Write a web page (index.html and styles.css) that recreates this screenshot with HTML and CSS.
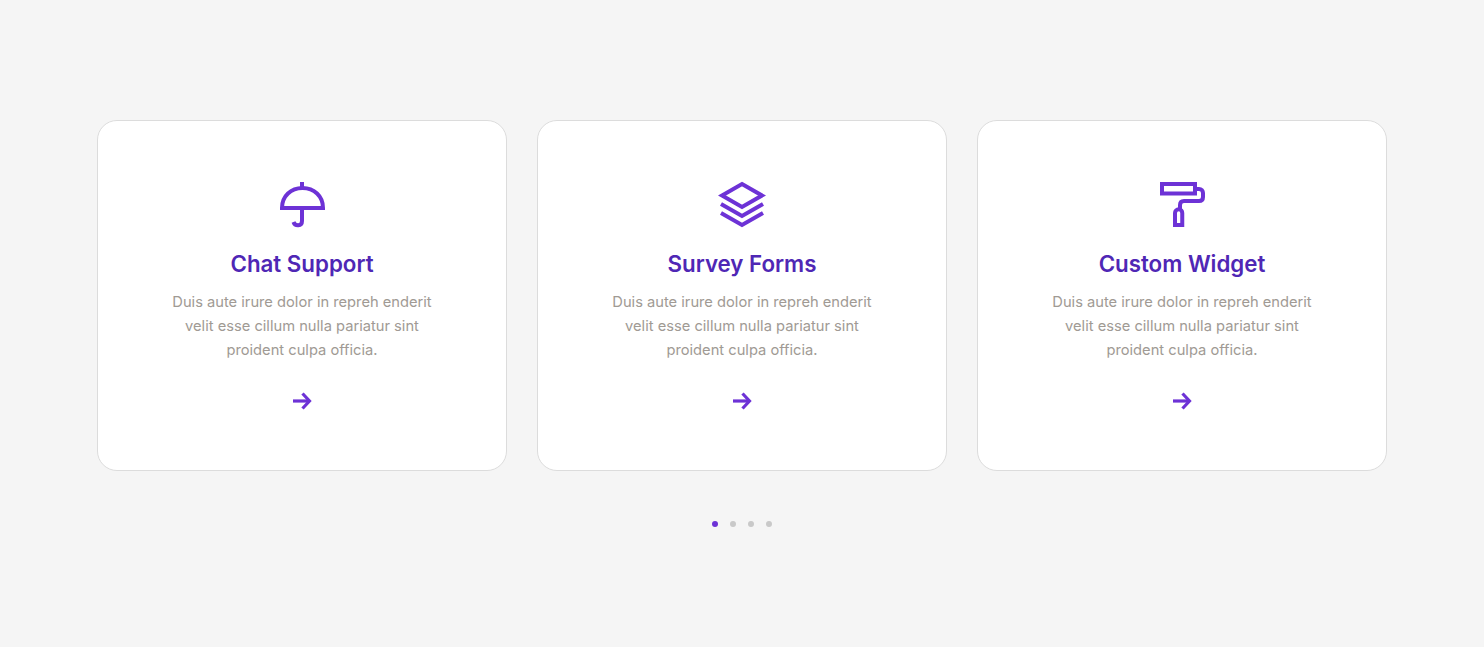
FILE: index.html
```html
<!DOCTYPE html>
<html lang="en">
<head>
<meta charset="UTF-8">
<meta name="viewport" content="width=device-width, initial-scale=1.0">
<title>Features</title>
<link rel="stylesheet" href="styles.css">
</head>
<body>

<section class="features">
  <div class="card-row">

    <div class="card">
      <svg class="card-icon" viewBox="0 0 48 48" fill="none" stroke="#6d32d6" stroke-width="4">
        <path d="M24 1v6"/>
        <path d="M4 27c0-12 9-20 20.500-20s20.500 8 20.500 20z"/>
        <path d="M24 27v13c0 5.500-7 5.500-8.500 1"/>
      </svg>
      <h3>Chat Support</h3>
      <p>Duis aute irure dolor in repreh enderit velit esse cillum nulla pariatur sint proident culpa officia.</p>
      <a class="card-link" href="#">
        <svg viewBox="0 0 20 20" fill="none" stroke="#6d32d6" stroke-width="3.200"><path d="M1 10h16"/><path d="M10.500 2.500L17.500 10l-7 7.500"/></svg>
      </a>
    </div>

    <div class="card">
      <svg class="card-icon" viewBox="0 0 48 48" fill="none" stroke="#6d32d6" stroke-width="4">
        <path d="M24 3L44 14.500 24 26 4 14.500z"/>
        <path d="M3 23L24 35 45 23"/>
        <path d="M3 32L24 44 45 32"/>
      </svg>
      <h3>Survey Forms</h3>
      <p>Duis aute irure dolor in repreh enderit velit esse cillum nulla pariatur sint proident culpa officia.</p>
      <a class="card-link" href="#">
        <svg viewBox="0 0 20 20" fill="none" stroke="#6d32d6" stroke-width="3.200"><path d="M1 10h16"/><path d="M10.500 2.500L17.500 10l-7 7.500"/></svg>
      </a>
    </div>

    <div class="card">
      <svg class="card-icon" viewBox="0 0 48 48" fill="none" stroke="#6d32d6" stroke-width="4">
        <path d="M4 3h33v9.500H4z"/>
        <path d="M37 8h4c2.500 0 4 1.750 4 4v4c0 2.500-1.500 4-4 4H26c-2.500 0-4 1.500-4 4v5"/>
        <path d="M17 44V32c0-2 1.750-3.750 3.750-3.750s3.500 1.750 3.500 3.750v12z"/>
      </svg>
      <h3>Custom Widget</h3>
      <p>Duis aute irure dolor in repreh enderit velit esse cillum nulla pariatur sint proident culpa officia.</p>
      <a class="card-link" href="#">
        <svg viewBox="0 0 20 20" fill="none" stroke="#6d32d6" stroke-width="3.200"><path d="M1 10h16"/><path d="M10.500 2.500L17.500 10l-7 7.500"/></svg>
      </a>
    </div>

  </div>

  <div class="dots">
    <span class="dot active"></span>
    <span class="dot"></span>
    <span class="dot"></span>
    <span class="dot"></span>
  </div>
</section>

</body>
</html>
```

FILE: styles.css
```css
body {
  margin: 0;
  background: #f5f5f5;
  font-family: 'Inter', 'Open Sans', sans-serif;
}

.features {
  width: 1290px;
  margin: 0 auto;
  padding-top: 120px;
}

.card-row {
  display: flex;
  gap: 30px;
}

.card {
  box-sizing: border-box;
  width: 410px;
  height: 351px;
  padding: 60px 60px 0;
  background: #fff;
  border: 1px solid #dcdcdc;
  border-radius: 20px;
  text-align: center;
}

.card-icon {
  display: block;
  width: 48px;
  height: 48px;
  margin: 0 auto;
}

.card h3 {
  margin: 20px 0 0;
  font-size: 22.300px;
  line-height: 30px;
  font-weight: 600;
  color: #4f27b5;
}

.card p {
  margin: 11px 0 0;
  font-size: 14.700px;
  line-height: 24px;
  color: #a09a94;
}

.card-link {
  display: block;
  width: 20px;
  height: 20px;
  margin: 29px auto 0;
}

.card-link svg {
  display: block;
  width: 20px;
  height: 20px;
}

.dots {
  display: flex;
  justify-content: center;
  gap: 12px;
  margin-top: 50px;
}

.dot {
  width: 6px;
  height: 6px;
  border-radius: 50%;
  background: #c9c9c9;
}

.dot.active {
  background: #6d32d6;
}
```
